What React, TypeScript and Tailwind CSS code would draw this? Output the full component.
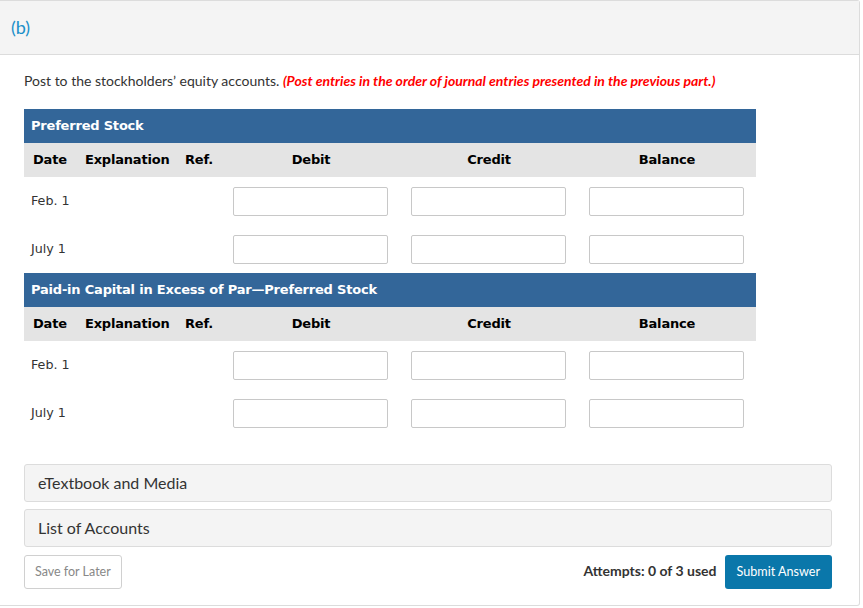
const rows = ["Feb. 1", "July 1"];

const accounts = [
  "Preferred Stock",
  "Paid-in Capital in Excess of Par\u2014Preferred Stock",
];

function AmountInput() {
  return (
    <div className="pl-[11px]">
      <input
        type="text"
        className="w-[155px] h-[29px] border border-[#c8c8c8] rounded-[2px] bg-white outline-none"
      />
    </div>
  );
}

function Ledger({ title }: { title: string }) {
  return (
    <div className="font-['DejaVu_Sans',Verdana,sans-serif]">
      <div className="h-[34px] bg-[#336699] text-white text-[13px] font-bold flex items-center px-[7px] tracking-[-0.2px]">
        {title}
      </div>
      <div className="grid grid-cols-[52px_100px_46px_178px_178px_178px] h-[34px] bg-[#e4e4e4] items-center text-[13px] font-bold text-black tracking-[-0.2px]">
        <span className="pl-[9px]">Date</span>
        <span className="pl-[9px]">Explanation</span>
        <span className="pl-[9px]">Ref.</span>
        <span className="text-center">Debit</span>
        <span className="text-center">Credit</span>
        <span className="text-center">Balance</span>
      </div>
      {rows.map((date) => (
        <div
          key={date}
          className="grid grid-cols-[52px_100px_46px_178px_178px_178px] h-[48px] items-center text-[12.7px] text-[#333]"
        >
          <span className="pl-[7px]">{date}</span>
          <span />
          <span />
          <AmountInput />
          <AmountInput />
          <AmountInput />
        </div>
      ))}
    </div>
  );
}

export default function App() {
  return (
    <div className="w-[863px] h-[608px] bg-white font-['Lato',sans-serif] text-[#333]">
      <div className="w-[860px] h-[606px] border border-[#dcdcdc] rounded-[3px] border-l-0 rounded-l-none flex flex-col">
        <div className="h-[54px] bg-[#f4f4f4] border-b border-[#dcdcdc] flex items-center pl-[11px]">
          <span className="text-[18px] text-[#1a8fc9]">(b)</span>
        </div>
        <div className="px-[24px] flex-1 flex flex-col">
          <p className="mt-[17px] text-[14px] leading-[18px]">
            Post to the stockholders’ equity accounts.{" "}
            <em className="font-bold text-[#ff0000]">
              (Post entries in the order of journal entries presented in the previous part.)
            </em>
          </p>
          <div className="mt-[19px] w-[732px]">
            {accounts.map((a) => (
              <Ledger key={a} title={a} />
            ))}
          </div>
          <div className="mt-[27px] flex flex-col gap-[7px] w-[808px]">
            <div className="h-[38px] bg-[#f4f4f4] border border-[#dcdcdc] rounded-[3px] flex items-center px-[13px] text-[16px]">
              eTextbook and Media
            </div>
            <div className="h-[38px] bg-[#f4f4f4] border border-[#dcdcdc] rounded-[3px] flex items-center px-[13px] text-[16px]">
              List of Accounts
            </div>
          </div>
          <div className="mt-[8px] w-[808px] flex items-center justify-between">
            <button className="h-[34px] px-[10px] border border-[#d0d0d0] rounded-[3px] bg-white text-[12.5px] text-[#888]">
              Save for Later
            </button>
            <div className="flex items-center gap-[8px]">
              <span className="text-[14px] leading-[18px] pb-[3px] font-bold text-[#333]">Attempts: 0 of 3 used</span>
              <button className="h-[34px] px-[12px] rounded-[3px] bg-[#0a77aa] text-white text-[12.6px]">
                Submit Answer
              </button>
            </div>
          </div>
        </div>
      </div>
    </div>
  );
}
